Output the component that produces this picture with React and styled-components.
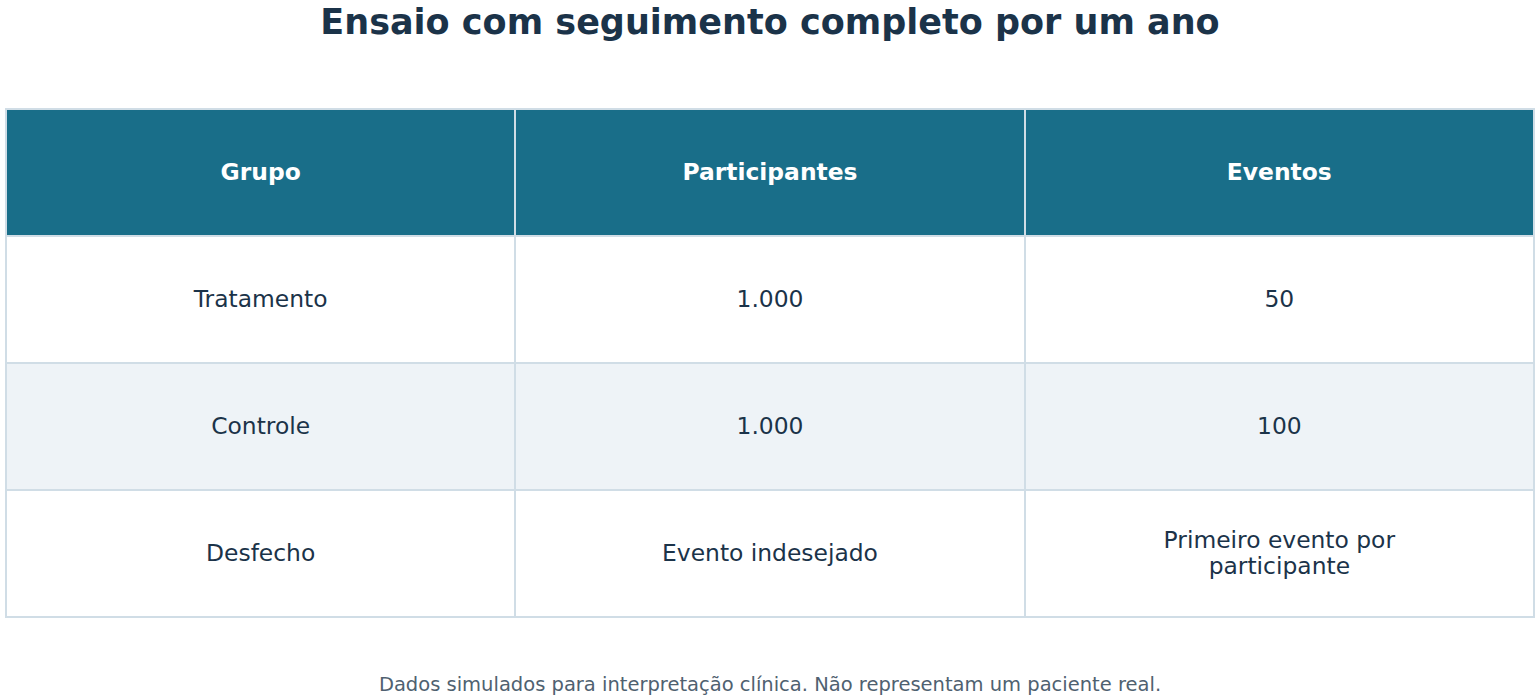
import React from 'react';
import styled, { createGlobalStyle } from 'styled-components';

const GlobalStyle = createGlobalStyle`
  html, body {
    margin: 0;
    padding: 0;
    background: #ffffff;
    font-family: 'DejaVu Sans', 'Liberation Sans', sans-serif;
  }
`;

const PageStyled = styled.div`
  width: 1540px;
  height: 700px;
  display: flex;
  flex-direction: column;
  align-items: center;
  overflow: hidden;
`;

const TitleStyled = styled.h1`
  margin: 0;
  height: 44px;
  line-height: 44px;
  font-size: 35px;
  font-weight: bold;
  color: #1b3349;
`;

const TableStyled = styled.table`
  margin-top: 64px;
  width: 1530px;
  border-collapse: collapse;
  table-layout: fixed;
  border: 2px solid #d0dde6;
`;

const HeadCell = styled.th`
  height: 123px;
  padding: 0 0 2px;
  background: #196e89;
  color: #ffffff;
  font-size: 23.4px;
  font-weight: bold;
  text-align: center;
  border: 2px solid #d0dde6;
`;

const Row = styled.tr`
  background: ${(p) => (p.$striped ? '#eef3f7' : '#ffffff')};
`;

const Cell = styled.td`
  height: 123px;
  padding: 0 80px 2px;
  color: #1b3349;
  font-size: 23.4px;
  line-height: 26px;
  text-align: center;
  border: 2px solid #d0dde6;
`;

const FooterStyled = styled.p`
  margin: 55px 0 0;
  font-size: 19.5px;
  color: #4f6170;
`;

const columns = ['Grupo', 'Participantes', 'Eventos'];

const rows = [
  ['Tratamento', '1.000', '50'],
  ['Controle', '1.000', '100'],
  ['Desfecho', 'Evento indesejado', 'Primeiro evento por participante'],
];

const App = () => {
  return (
    <PageStyled>
      <GlobalStyle />
      <TitleStyled>Ensaio com seguimento completo por um ano</TitleStyled>
      <TableStyled>
        <thead>
          <tr>
            {columns.map((c) => (
              <HeadCell key={c}>{c}</HeadCell>
            ))}
          </tr>
        </thead>
        <tbody>
          {rows.map((r, i) => (
            <Row key={r[0]} $striped={i === 1}>
              {r.map((v, j) => (
                <Cell key={j}>{v}</Cell>
              ))}
            </Row>
          ))}
        </tbody>
      </TableStyled>
      <FooterStyled>Dados simulados para interpretação clínica. Não representam um paciente real.</FooterStyled>
    </PageStyled>
  );
};

export default App;
